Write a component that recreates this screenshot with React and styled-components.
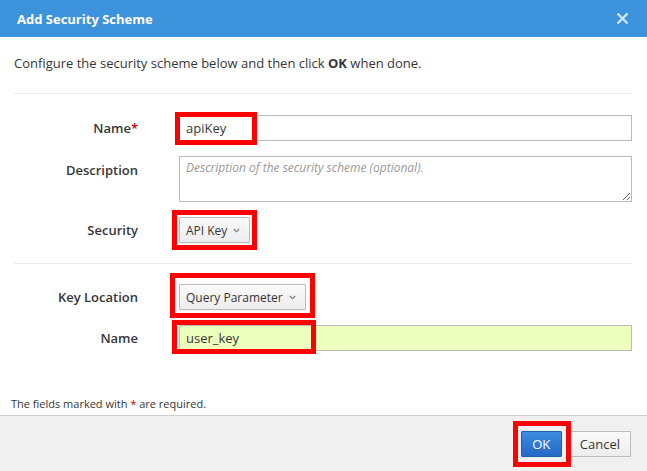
import React from 'react'
import styled, { createGlobalStyle } from 'styled-components'

const Global = createGlobalStyle`
  html, body {
    margin: 0;
    padding: 0;
    height: 100%;
  }
  body {
    font-family: 'Open Sans', 'Liberation Sans', sans-serif;
    color: #363636;
    background: #fff;
  }
  #root {
    height: 100%;
  }
`

const Dialog = styled.div`
  height: 100vh;
  display: flex;
  flex-direction: column;
  box-sizing: border-box;
`

const Header = styled.div`
  height: 37px;
  background: #3d92dc;
  display: flex;
  align-items: center;
  justify-content: space-between;
  padding: 0 18px 0 17px;
  flex-shrink: 0;
`

const Title = styled.h4`
  margin: 0;
  color: #fff;
  font-size: 13px;
  font-weight: 700;
`

const Close = styled.button`
  border: 0;
  background: none;
  padding: 0;
  width: 14px;
  height: 14px;
  display: flex;
  align-items: center;
  justify-content: center;
  cursor: pointer;
`

const Body = styled.div`
  flex: 1;
  display: flex;
  flex-direction: column;
  padding: 17px 15px 4px 14px;
`

const Intro = styled.p`
  margin: 0;
  font-size: 13px;
  line-height: 18px;

  b {
    font-weight: 700;
  }
`

const Divider = styled.hr`
  border: 0;
  border-top: 1px solid #ececec;
  margin: ${p => p.$top}px 0 0;
`

const Row = styled.div`
  display: grid;
  grid-template-columns: 124px 1fr;
  column-gap: 41px;
  align-items: ${p => (p.$top ? 'start' : 'center')};
  margin-top: ${p => p.$gap}px;
`

const Label = styled.label`
  text-align: right;
  font-size: 13px;
  font-weight: 600;
  color: #363636;
  line-height: 18px;
  padding-top: ${p => (p.$top ? '5px' : '0')};

  span {
    color: #c00;
  }
`

const Cell = styled.div`
  position: relative;
  display: flex;
`

const Input = styled.input`
  box-sizing: border-box;
  width: 100%;
  height: 26px;
  border: 1px solid #bbb;
  background: ${p => (p.$valid ? '#eeffbd' : '#fff')};
  font-family: inherit;
  font-size: 13px;
  color: #363636;
  padding: 0 6px;
  outline: none;
`

const TextArea = styled.textarea`
  box-sizing: border-box;
  width: 100%;
  height: 46px;
  border: 1px solid #bbb;
  font-family: inherit;
  font-size: 12px;
  padding: 2px 6px;
  color: #363636;
  outline: none;

  &::placeholder {
    color: #999;
    font-style: italic;
  }
`

const Dropdown = styled.button`
  box-sizing: border-box;
  height: 26px;
  display: inline-flex;
  align-items: center;
  gap: 6px;
  padding: 0 9px 0 6px;
  border: 1px solid #bbb;
  border-radius: 1px;
  background: linear-gradient(#fafafa, #ededed);
  font-family: inherit;
  font-size: 12px;
  color: #363636;
  box-shadow: 0 1px 1px rgba(3, 3, 3, 0.05);
`

const Highlight = styled.div`
  position: absolute;
  top: ${p => p.$t}px;
  right: ${p => p.$r}px;
  bottom: ${p => p.$b}px;
  left: ${p => p.$l}px;
  border: 5px solid #f00;
  pointer-events: none;
`

const Note = styled.p`
  margin: auto 0 0 -3px;
  font-size: 11px;
  line-height: 14px;
  color: #363636;

  span {
    color: #c00;
  }
`

const Footer = styled.div`
  flex-shrink: 0;
  background: #f0f0f0;
  border-top: 1px solid #d1d1d1;
  display: flex;
  justify-content: flex-end;
  gap: 7px;
  padding: 15px 16px 14px;
`

const Btn = styled.button`
  box-sizing: border-box;
  height: 26px;
  min-width: ${p => p.$w}px;
  padding: 0 10px;
  font-family: inherit;
  font-size: 13px;
  border-radius: 1px;
  border: 1px solid ${p => (p.$primary ? '#1f5fae' : '#bbb')};
  color: ${p => (p.$primary ? '#fff' : '#363636')};
  background: ${p =>
    p.$primary ? 'linear-gradient(#3b8de0, #2568c6)' : 'linear-gradient(#fafafa, #ededed)'};
`

const Anchor = styled.div`
  position: relative;
  display: inline-flex;
`

const Chevron = () => (
  <svg width="7" height="5" viewBox="0 0 7 5">
    <polyline points="0.8,1 3.5,3.8 6.2,1" fill="none" stroke="#777" strokeWidth="1.1" />
  </svg>
)

export default function App () {
  return (
    <>
      <Global />
      <Dialog>
        <Header>
          <Title>Add Security Scheme</Title>
          <Close aria-label='close'>
            <svg width="13" height="13" viewBox="0 0 13 13">
              <path d="M1.5 1.5 L11.5 11.5 M11.5 1.5 L1.5 11.5" stroke="#cfe3f6" strokeWidth="2.4" />
            </svg>
          </Close>
        </Header>
        <Body>
          <Intro>
            Configure the security scheme below and then click <b>OK</b> when done.
          </Intro>
          <Divider $top={21} />

          <Row $gap={21}>
            <Label>Name<span>*</span></Label>
            <Cell>
              <Input defaultValue='apiKey' />
              <Highlight $t={-3} $l={-4} $b={-4} $r={375} />
            </Cell>
          </Row>

          <Row $gap={15} $top>
            <Label $top>Description</Label>
            <Cell>
              <TextArea placeholder='Description of the security scheme (optional).' />
            </Cell>
          </Row>

          <Row $gap={15}>
            <Label>Security</Label>
            <Cell>
              <Anchor>
                <Dropdown>API Key <Chevron /></Dropdown>
                <Highlight $t={-7} $l={-7} $b={-7} $r={-7} />
              </Anchor>
            </Cell>
          </Row>

          <Divider $top={20} />

          <Row $gap={20}>
            <Label>Key Location</Label>
            <Cell>
              <Anchor>
                <Dropdown>Query Parameter <Chevron /></Dropdown>
                <Highlight $t={-11} $l={-9} $b={-8} $r={-9} />
              </Anchor>
            </Cell>
          </Row>

          <Row $gap={15}>
            <Label>Name</Label>
            <Cell>
              <Input $valid defaultValue='user_key' />
              <Highlight $t={-5} $l={-7} $b={-3} $r={316} />
            </Cell>
          </Row>

          <Note>The fields marked with <span>*</span> are required.</Note>
        </Body>
        <Footer>
          <Anchor>
            <Btn $primary $w={41}>OK</Btn>
            <Highlight $t={-10} $l={-8} $b={-10} $r={-9} />
          </Anchor>
          <Btn $w={62}>Cancel</Btn>
        </Footer>
      </Dialog>
    </>
  )
}
